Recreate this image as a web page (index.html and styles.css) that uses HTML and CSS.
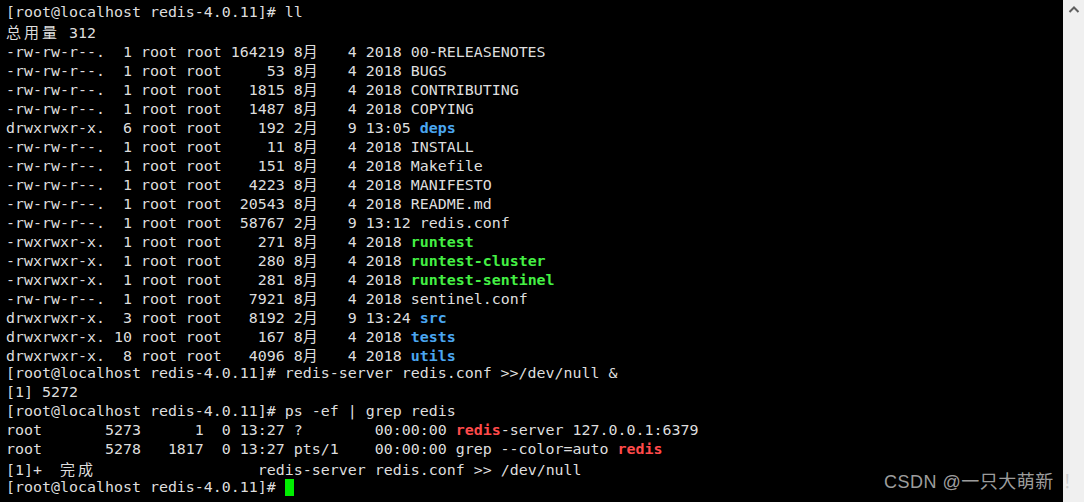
FILE: index.html
```html
<!DOCTYPE html>
<html lang="zh-CN">
<head>
	<meta charset="UTF-8">
	<title>Xshell - redis</title>
	<link rel="stylesheet" href="styles.css">
</head>
<body>
	<div class="window">
		<div class="term">
			<div class="ln">[root@localhost redis-4.0.11]# ll</div>
			<div class="ln"><span class="w">总</span><span class="w">用</span><span class="w">量</span> 312</div>
			<div class="ln">-rw-rw-r--.  1 root root 164219 8<span class="w">月</span>   4 2018 00-RELEASENOTES</div>
			<div class="ln">-rw-rw-r--.  1 root root     53 8<span class="w">月</span>   4 2018 BUGS</div>
			<div class="ln">-rw-rw-r--.  1 root root   1815 8<span class="w">月</span>   4 2018 CONTRIBUTING</div>
			<div class="ln">-rw-rw-r--.  1 root root   1487 8<span class="w">月</span>   4 2018 COPYING</div>
			<div class="ln">drwxrwxr-x.  6 root root    192 2<span class="w">月</span>   9 13:05 <b class="dir">deps</b></div>
			<div class="ln">-rw-rw-r--.  1 root root     11 8<span class="w">月</span>   4 2018 INSTALL</div>
			<div class="ln">-rw-rw-r--.  1 root root    151 8<span class="w">月</span>   4 2018 Makefile</div>
			<div class="ln">-rw-rw-r--.  1 root root   4223 8<span class="w">月</span>   4 2018 MANIFESTO</div>
			<div class="ln">-rw-rw-r--.  1 root root  20543 8<span class="w">月</span>   4 2018 README.md</div>
			<div class="ln">-rw-rw-r--.  1 root root  58767 2<span class="w">月</span>   9 13:12 redis.conf</div>
			<div class="ln">-rwxrwxr-x.  1 root root    271 8<span class="w">月</span>   4 2018 <b class="exe">runtest</b></div>
			<div class="ln">-rwxrwxr-x.  1 root root    280 8<span class="w">月</span>   4 2018 <b class="exe">runtest-cluster</b></div>
			<div class="ln">-rwxrwxr-x.  1 root root    281 8<span class="w">月</span>   4 2018 <b class="exe">runtest-sentinel</b></div>
			<div class="ln">-rw-rw-r--.  1 root root   7921 8<span class="w">月</span>   4 2018 sentinel.conf</div>
			<div class="ln">drwxrwxr-x.  3 root root   8192 2<span class="w">月</span>   9 13:24 <b class="dir">src</b></div>
			<div class="ln">drwxrwxr-x. 10 root root    167 8<span class="w">月</span>   4 2018 <b class="dir">tests</b></div>
			<div class="ln">drwxrwxr-x.  8 root root   4096 8<span class="w">月</span>   4 2018 <b class="dir">utils</b></div>
			<div class="ln">[root@localhost redis-4.0.11]# redis-server redis.conf &gt;&gt;/dev/null &amp;</div>
			<div class="ln">[1] 5272</div>
			<div class="ln">[root@localhost redis-4.0.11]# ps -ef | grep redis</div>
			<div class="ln">root       5273      1  0 13:27 ?        00:00:00 <b class="hit">redis</b>-server 127.0.0.1:6379</div>
			<div class="ln">root       5278   1817  0 13:27 pts/1    00:00:00 grep --color=auto <b class="hit">redis</b></div>
			<div class="ln">[1]+  <span class="w">完</span><span class="w">成</span>                  redis-server redis.conf &gt;&gt; /dev/null</div>
			<div class="ln">[root@localhost redis-4.0.11]# <span class="cursor"></span></div>
		</div>
		<div class="scrollbar">
			<svg class="arrow" width="12" height="8" viewBox="0 0 12 8">
				<polyline points="1.5,7 6,2.5 10.5,7" fill="none" stroke="#606060" stroke-width="2"/>
			</svg>
		</div>
		<div class="mark">CSDN @一只大萌新<span class="bang">！</span></div>
	</div>
</body>
</html>
```
FILE: styles.css
```css
*{margin:0; padding:0;}
body{background:#000; width:1084px; height:502px; overflow:hidden;}
.window{
	position: relative;
	display: flex;
	width: 1084px;
	height: 502px;
}
.term{
	flex: 1;
	background: #000;
	padding: 3px 0 0 6px;
	color: #dedede;
	font-family: "DejaVu Sans Mono", "Noto Sans CJK SC", monospace;
	font-size: 14.95px;
}
.ln{
	height: 19px;
	line-height: 19px;
	white-space: pre;
}
.w{
	display: inline-block;
	width: 18px;
	font-family: "Noto Sans CJK SC", sans-serif;
	font-size: 15px;
	text-align: left;
}
b{font-weight: bold;}
.dir{color:#4aa6f0;}
.exe{color:#44f044;}
.hit{color:#ff4a4a;}
.cursor{
	display: inline-block;
	width: 9px;
	height: 17px;
	background: #00ee00;
	vertical-align: -4px;
}
.scrollbar{
	width: 21px;
	background: #f0f0f0;
	display: flex;
	justify-content: center;
	padding-top: 5px;
	align-items: flex-start;
}
.mark{
	position: absolute;
	left: 884px;
	top: 473px;
	font-family: "Liberation Sans", "Noto Sans CJK SC", sans-serif;
	font-size: 18px;
	line-height: 18px;
	letter-spacing: 0.5px;
	color: rgba(200,200,200,0.8);
	white-space: nowrap;
}
.bang{padding-left: 9px;}
```
